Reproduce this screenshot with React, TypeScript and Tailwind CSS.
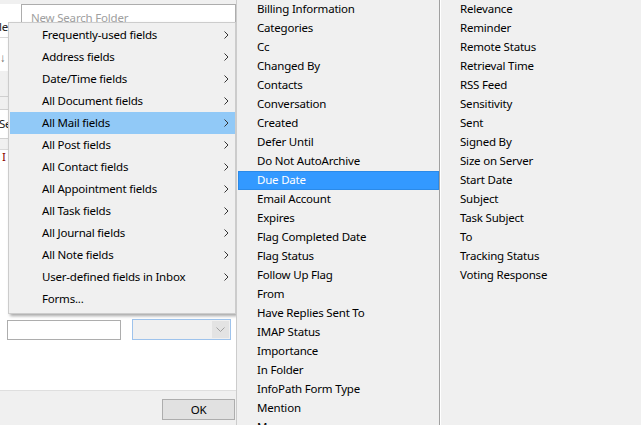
import React from 'react';

const fieldGroups = [
  'Frequently-used fields',
  'Address fields',
  'Date/Time fields',
  'All Document fields',
  'All Mail fields',
  'All Post fields',
  'All Contact fields',
  'All Appointment fields',
  'All Task fields',
  'All Journal fields',
  'All Note fields',
  'User-defined fields in Inbox',
  'Forms...',
];

const mailCol1 = [
  'Billing Information', 'Categories', 'Cc', 'Changed By', 'Contacts', 'Conversation',
  'Created', 'Defer Until', 'Do Not AutoArchive', 'Due Date', 'Email Account', 'Expires',
  'Flag Completed Date', 'Flag Status', 'Follow Up Flag', 'From', 'Have Replies Sent To',
  'IMAP Status', 'Importance', 'In Folder', 'InfoPath Form Type', 'Mention', 'Message',
];

const mailCol2 = [
  'Relevance', 'Reminder', 'Remote Status', 'Retrieval Time', 'RSS Feed', 'Sensitivity',
  'Sent', 'Signed By', 'Size on Server', 'Start Date', 'Subject', 'Task Subject', 'To',
  'Tracking Status', 'Voting Response',
];

function Chevron() {
  return (
    <svg width="5" height="8" viewBox="0 0 5 8" className="shrink-0">
      <path d="M0.5 0.5 L4 4 L0.5 7.5" fill="none" stroke="#333" strokeWidth="1" />
    </svg>
  );
}

export default function App() {
  return (
    <div className="relative w-[641px] h-[425px] overflow-hidden bg-[#f0f0f0] font-['Noto_Sans',sans-serif] text-[11.5px] tracking-[-0.2px] text-black">
      {/* Dialog behind the menus */}
      <div className="flex flex-col w-[236px] h-full bg-white">
        <div className="h-[4px] bg-[#f0f0f0]" />
        <div className="flex h-[34px] border-b border-[#d9d9d9]">
          <div className="w-[21px] pt-[17px] text-[#222] overflow-hidden leading-none">
            <span className="-ml-[1px]">le</span>
          </div>
          <div className="flex-1 h-[28px] border border-[#adadad] pl-[9px] pt-[3px] text-[#a0a0a0] leading-[19px]">
            New Search Folder
          </div>
        </div>
        <div className="h-[33px] pt-[14px] text-[#666] leading-none">↓</div>
        <div className="h-[25px] bg-[#f0f0f0]" />
        <div className="h-[13px] bg-[#f0f0f0] border-t border-[#d0d0d0]" />
        <div className="h-[30px] border-y border-[#d0d0d0] flex items-center text-[#222]">
          <span className="-ml-[1px]">Se</span>
        </div>
        <div className="h-[10px] bg-[#f0f0f0]" />
        <div className="h-[14px] border-t border-[#d9d9d9] text-[#8b0000] leading-[13px] pl-[2px]">I</div>
        <div className="h-[156px]" />
        <div className="flex items-center gap-[11px] pl-[7px] h-[21px]">
          <div className="w-[114px] h-[20px] border border-[#adadad] bg-white" />
          <div className="flex w-[99px] h-[21px] border border-[#9ec3ec] bg-[#f0f0f0]">
            <div className="flex-1" />
            <div className="w-[17px] my-[1px] mr-[1px] bg-[#e3e3e3] flex items-center justify-center">
              <svg width="9" height="5" viewBox="0 0 9 5">
                <path d="M0.5 0.5 L4.5 4.5 L8.5 0.5" fill="none" stroke="#a0a0a0" strokeWidth="1" />
              </svg>
            </div>
          </div>
        </div>
        <div className="flex-1" />
        <div className="h-[35px] bg-[#f0f0f0] border-t border-[#dfdfdf] flex justify-end items-start pt-[8px] pr-[1px]">
          <button className="w-[73px] h-[21px] bg-[#e1e1e1] border border-[#adadad] leading-[19px] text-center">
            OK
          </button>
        </div>
      </div>

      {/* Field group menu */}
      <div className="absolute left-[8px] top-[22px] w-[228px] h-[292px] bg-[#f0f0f0] border border-[#cccccc] pt-[1px] shadow-[2px_2px_3px_rgba(0,0,0,0.35)]">
        {fieldGroups.map((label) => {
          const active = label === 'All Mail fields';
          return (
            <div
              key={label}
              className={`flex items-center justify-between h-[22px] ml-[1px] pl-[32px] pr-[6px] ${active ? 'bg-[#91c9f7]' : ''}`}
            >
              <span className="whitespace-nowrap">{label}</span>
              {label !== 'Forms...' && <Chevron />}
            </div>
          );
        })}
      </div>

      {/* All Mail fields submenu */}
      <div className="absolute left-[236px] top-0 right-0 bottom-0 flex bg-[#f0f0f0] border-l border-[#cccccc]">
        <div className="w-[202px] pl-[1px]">
          {mailCol1.map((label) => {
            const active = label === 'Due Date';
            return (
              <div
                key={label}
                className={`h-[19px] pl-[19px] leading-[18px] whitespace-nowrap ${active ? 'bg-[#3399ff] text-white outline outline-1 -outline-offset-1 outline-[#2b8ae8]' : ''}`}
              >
                {label}
              </div>
            );
          })}
        </div>
        <div className="w-[1px] bg-[#a0a0a0]" />
        <div className="w-[1px] bg-white" />
        <div className="flex-1 pl-[19px]">
          {mailCol2.map((label) => (
            <div key={label} className="h-[19px] leading-[18px] whitespace-nowrap">
              {label}
            </div>
          ))}
        </div>
      </div>
    </div>
  );
}
